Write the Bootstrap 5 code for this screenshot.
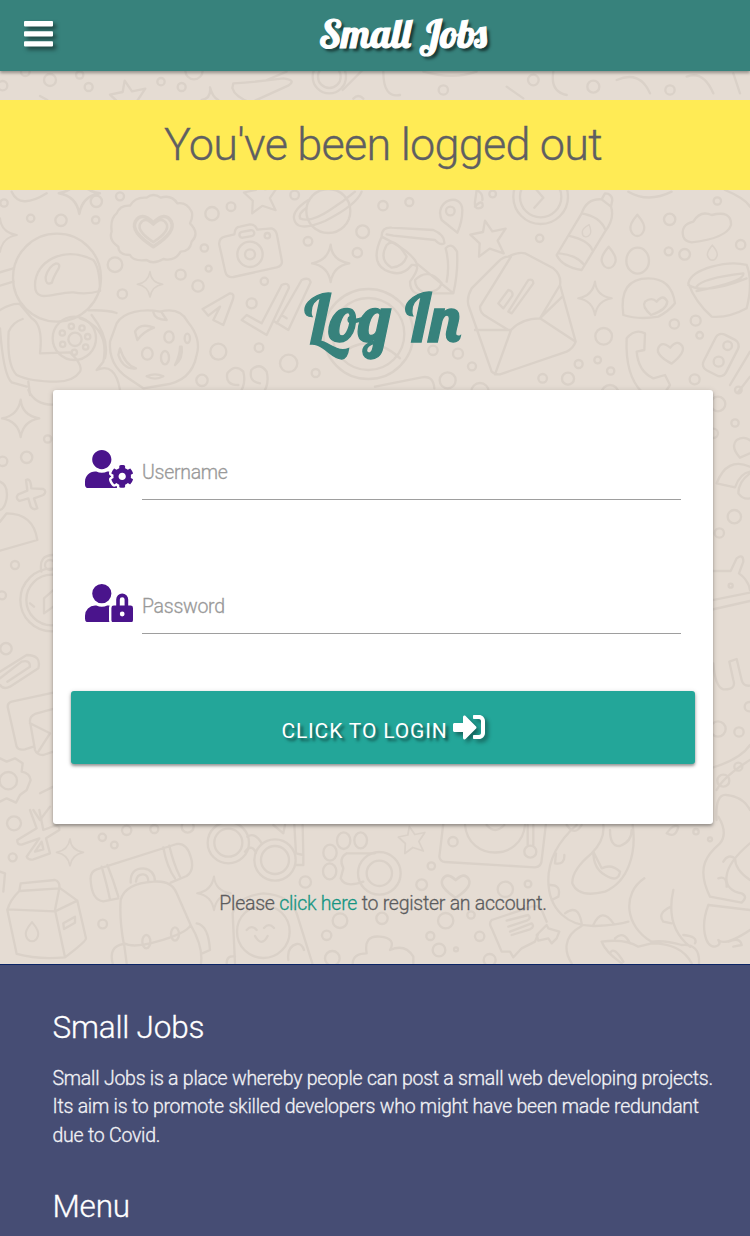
<!DOCTYPE html>
<html lang="en">
<head>
<meta charset="utf-8">
<meta name="viewport" content="width=device-width, initial-scale=1">
<title>Small Jobs</title>
<link href="https://cdn.jsdelivr.net/npm/bootstrap@5.3.0/dist/css/bootstrap.min.css" rel="stylesheet">
<style>
html{overflow:hidden}
body{font-family:Roboto,sans-serif;font-weight:300;-webkit-text-stroke:.3px;font-size:19.5px;letter-spacing:-.25px;line-height:1.5;color:#5c5c5e;background:#e5dcd3;height:1236px;overflow:hidden;position:relative}
svg{-webkit-text-stroke:0}
.doodles{position:absolute;left:0;top:71px;width:750px;height:893px;z-index:-1;fill:none;stroke:#dad1c8;stroke-width:7;stroke-linejoin:round;stroke-linecap:round}
.topbar{height:71px;background:#37827c;box-shadow:0 2px 3px rgba(0,0,0,.35);padding:0 24px;position:relative}
.topbar svg{filter:drop-shadow(3px 3px 2px rgba(0,0,0,.5));margin-top:-1px}
.script{font-family:Lobster,"DejaVu Serif Condensed",serif;font-weight:400;letter-spacing:0;white-space:nowrap}
.logo{font-size:39.5px;color:#fff;text-shadow:3px 3px 3px rgba(0,0,0,.6);width:176px;margin-left:265px;line-height:70px;margin-top:-5px;-webkit-text-stroke:1.1px #fff}
.flash{margin-top:28.5px;height:90.5px;background:#ffeb55;font-size:45px;font-weight:300;line-height:90px;padding-left:16px;letter-spacing:-.77px;color:#5f5f62}
.login-title{font-size:66.5px;line-height:72px;color:#37827c;margin:91px 0 37px;padding-left:15px;-webkit-text-stroke:1.3px #37827c}
.panel{margin:0 37px 0 53px;height:434px;border-radius:3px;background:#fff;box-shadow:0 2px 3px rgba(0,0,0,.28),0 1px 6px rgba(0,0,0,.14);padding:52px 18px 0}
.field{margin:0 14.5px 76px 14px;height:58px}
.field svg{width:48px;height:38.4px;fill:#4a148c;margin:8px 9px 0 0;flex:none}
.entry{border:0;border-bottom:1px solid #9e9e9e;border-radius:0;background:none;padding:3px 0 0;height:58px;font-size:19.5px;font-weight:300;letter-spacing:-.28px;color:#555;box-shadow:none!important}
.entry::placeholder{color:#999;opacity:1}
.go{height:73px;border:0;border-radius:3px;background:#23a699!important;color:#fff!important;font-size:21px;font-weight:400;letter-spacing:.85px;-webkit-text-stroke:0;box-shadow:0 2px 3px rgba(0,0,0,.35),0 1px 5px rgba(0,0,0,.16);margin-top:-19px;text-shadow:3px 3px 3px rgba(0,0,0,.5);padding-top:14px}
.go svg{width:32px;height:32px;fill:#fff;filter:drop-shadow(3px 3px 2px rgba(0,0,0,.4));margin:-9px 0 0 5px}
.register{margin:65px 0 46px;padding-left:16px;height:29px;line-height:29px}
.register a{color:#159582;text-decoration:none}
.site-foot{background:#464d74;border-top:1px solid #0b2566;height:272px;padding:40px 30px 0 52.5px;color:#f1f1f5}
.site-foot h2{font-size:31.5px;font-weight:300;letter-spacing:-.2px;line-height:46px;margin:0;color:#fff}
.site-foot p{line-height:28.5px;margin:13.6px -10px 34.4px 0;padding:0;letter-spacing:-.24px}
</style>
</head>
<body>
<svg class="doodles" viewBox="0 71 750 893" aria-hidden="true">
<defs>
<path id="spark" d="M0-56Q4-8 56 0Q8 8 0 56Q-8 8-56 0Q-8-8 0-56Z"/>
<path id="star" d="M-12-50L10-18L50-26L26 10L44 48L2 34L-30 58L-28 18L-56-8L-18-16Z"/>
<path id="heart" d="M0 34Q-46 4-36-16Q-24-38 0-14Q24-38 36-16Q46 4 0 34Z"/>
<path id="drop" d="M0-32Q26-2 20 14Q14 32 0 32Q-14 32-20 14Q-26-2 0-32Z"/>
</defs>
<!-- strip under the bar -->
<g transform="scale(.33333)">
<circle cx="8" cy="257" r="14"/><circle cx="150" cy="240" r="18"/><circle cx="76" cy="215" r="13"/><circle cx="239" cy="225" r="11"/><circle cx="266" cy="261" r="12"/><circle cx="483" cy="245" r="11"/><circle cx="545" cy="261" r="12"/><circle cx="582" cy="212" r="26"/>
<use href="#star" transform="translate(386 292)"/><path d="M700 250Q780 245 850 235Q890 240 866 256L752 308Q704 290 697 264ZM800 240L860 215M630 262Q634 296 605 300M630 262Q638 292 655 300M120 288L142 300"/>
<circle cx="988" cy="230" r="50"/><circle cx="988" cy="230" r="34"/><path d="M1028 270L1088 210M1060 296q15-16 30 0M1150 215q0 80 50 70M1270 215q90 25 160 0M1520 260l50 35M1660 215q-10 60 40 70M1850 240q70-30 100 40M2060 230q50-20 80 50M2200 220l20 60"/>
<circle cx="1330" cy="270" r="14"/><circle cx="1600" cy="240" r="16"/><circle cx="1780" cy="260" r="18"/><circle cx="2010" cy="270" r="14"/>
</g>
<!-- astronaut, badge, camera, cookie -->
<g transform="translate(0 185) scale(.33333)">
<circle cx="171" cy="278" r="132"/><path d="M105 300C105 230 190 180 280 225Q300 250 300 318Q260 330 220 322C165 320 105 360 105 300Z"/><path d="M137 276Q145 244 168 235Q182 236 176 250Q158 280 156 293Q136 303 137 276ZM40 250L0 262M40 290L0 302M0 375Q40 352 64 358M265 376Q320 374 350 384M60 358L95 400Q130 420 120 505L210 502Q250 540 240 560Q220 590 170 590Q90 590 50 570Q20 540 26 440Q40 410 68 402M0 430Q10 570 35 592L80 605M240 400Q330 430 310 530L290 555Q345 530 360 615M85 590L90 630M275 390Q330 460 315 520"/>
<circle cx="223" cy="460" r="65"/><circle cx="225" cy="463" r="20"/><circle cx="214" cy="424" r="8"/><circle cx="246" cy="429" r="8"/><circle cx="263" cy="455" r="8"/><circle cx="257" cy="486" r="8"/><circle cx="187" cy="444" r="8"/><circle cx="188" cy="478" r="8"/><circle cx="223" cy="502" r="8"/>
<path d="M350 415C370 380 430 370 480 380Q540 365 563 410Q605 460 590 510Q575 590 490 600L430 610L385 580Q325 540 330 470ZM405 440Q420 412 462 428Q430 440 412 465ZM360 490Q375 540 408 550Q370 555 355 510ZM545 485Q550 520 525 540Q540 510 540 485ZM460 382Q465 405 500 405L485 382M440 574q25-12 50 0q-25 14-50 0"/><ellipse cx="507" cy="456" rx="14" ry="17"/><ellipse cx="442" cy="506" rx="16" ry="18"/><ellipse cx="495" cy="518" rx="12" ry="20"/><ellipse cx="562" cy="460" rx="8" ry="14"/>
<path d="M350 85Q360 60 390 62Q405 35 440 38Q460 22 482 38Q515 28 532 55Q560 50 575 80Q580 95 570 115Q600 145 575 170Q570 200 542 200Q525 230 490 222Q460 240 440 225Q400 230 390 210Q355 210 355 185Q325 165 335 140Q330 100 350 85Z"/><use href="#heart" transform="translate(460 134) scale(1.5)"/><use href="#heart" transform="translate(460 134) scale(1.1)"/>
<path d="M675 155L703 148Q705 125 720 125L750 118Q765 118 772 134L815 130Q830 135 832 155L846 230Q846 242 830 247L700 276Q680 278 676 260L658 180Q655 160 675 155Z"/><circle cx="750" cy="208" r="38"/><circle cx="750" cy="208" r="15"/><circle cx="802" cy="152" r="8"/><rect x="718" y="138" width="45" height="18" rx="9" transform="rotate(-10 740 147)"/>
<circle cx="985" cy="78" r="66"/><path d="M925 45Q870 80 885 110Q900 140 975 108Q1070 60 1085 20M918 70Q895 85 900 100Q930 115 990 75Q1030 50 1065 20" /><use href="#spark" transform="translate(992 235)"/><use href="#spark" transform="translate(450 298) scale(.68)"/><use href="#spark" transform="translate(238 25) scale(1.1)"/><use href="#spark" transform="translate(0 150) scale(.9)"/><use href="#star" transform="translate(785 30) scale(.95)"/>
<path d="M35 20Q60 75 140 25M608 372L690 325Q705 325 698 345L670 420L640 405L660 365L625 392ZM725 405L740 390L785 415L845 300Q865 290 867 308L800 450ZM830 415L905 285Q928 275 932 292L865 435L825 410M845 390L860 400"/><circle cx="1105" cy="447" r="135"/><circle cx="1105" cy="447" r="108"/><path d="M1010 520Q1100 430 1200 520"/>
<circle cx="12" cy="54" r="11"/><circle cx="92" cy="100" r="11"/><circle cx="183" cy="106" r="17"/><circle cx="287" cy="105" r="11"/><circle cx="289" cy="49" r="17"/><circle cx="360" cy="34" r="12"/><circle cx="345" cy="239" r="22"/><circle cx="367" cy="327" r="14"/><circle cx="542" cy="269" r="15"/><circle cx="594" cy="303" r="17"/><circle cx="626" cy="251" r="9"/><circle cx="613" cy="189" r="11"/><circle cx="636" cy="86" r="20"/><circle cx="693" cy="65" r="13"/><circle cx="793" cy="289" r="11"/><circle cx="755" cy="355" r="15"/><circle cx="655" cy="500" r="24"/><circle cx="777" cy="488" r="13"/><circle cx="866" cy="535" r="26"/><circle cx="606" cy="586" r="17"/><circle cx="947" cy="564" r="12"/><circle cx="884" cy="30" r="13"/><circle cx="924" cy="169" r="13"/><circle cx="1088" cy="140" r="19"/><circle cx="1072" cy="203" r="14"/>
<path d="M715 600Q675 600 682 565Q705 535 730 560Q740 600 715 630M780 595Q745 590 754 555Q780 530 800 560Q810 600 785 630"/>
</g>
<!-- glasses, envelope, bottle, cup, phone -->
<g transform="translate(375 185) scale(.33333)">
<path d="M20 155Q20 125 50 128L175 135Q210 150 208 175Q195 182 180 165L55 152L35 148M20 155Q110 200 125 235L235 325Q250 260 246 200Q230 170 212 190Q225 240 215 290M20 155Q-15 230 30 255Q80 280 110 240Q145 235 105 290Q105 340 170 325L235 325M120 285Q160 245 200 295Q190 325 145 322Q120 310 120 285Z"/><path d="M35 180Q60 155 95 215Q85 245 50 248Q10 225 35 180Z"/>
<path d="M247 143L200 105C175 45 260 20 262 75Q262 110 247 143Z"/><circle cx="226" cy="78" r="13"/><use href="#star" transform="translate(342 157)"/><circle cx="497" cy="35" r="82"/><circle cx="497" cy="35" r="62"/><path d="M485 15L505 38L478 68M300 65q15-18 22-10q5 15-12 15q-12 0-10-20L305 15Q325 25 322 45"/>
<path d="M545 210L620 85Q635 40 680 43L708 65Q720 100 690 140L620 255Q560 245 545 210ZM620 85Q675 95 690 132M580 152Q640 165 652 195M553 205Q605 210 628 240M680 43L690 25Q710 25 712 45L708 65"/><use href="#drop" transform="translate(636 137) rotate(20) scale(.6)"/><use href="#drop" transform="translate(787 121)"/><use href="#drop" transform="translate(701 217)"/><use href="#drop" transform="translate(1012 203) scale(.7)"/>
<path d="M400 215Q430 200 450 205L535 250Q560 270 555 300L602 470Q595 490 575 500L375 568Q360 570 350 560L280 360Q275 335 290 310L370 230Q385 215 400 215ZM408 215L315 365Q315 385 335 395L400 435M555 300L495 400Q440 400 408 435L360 568M300 435L408 435M495 400L602 470M500 395L562 335M370 355L400 315Q415 318 412 332L385 370ZM400 380L460 285Q475 280 475 295L410 385Z"/>
<ellipse cx="788" cy="227" rx="34" ry="39"/><path d="M745 390Q730 280 820 280Q890 280 900 355Q880 380 850 395Q790 405 745 390ZM828 390Q800 365 810 350Q830 335 845 350Q865 325 877 350Q875 375 828 390Z"/><use href="#spark" transform="translate(660 340) scale(.9)"/>
<path d="M925 155Q915 120 955 110Q975 75 1010 90Q1070 75 1068 120Q1055 160 950 172Q930 170 925 155ZM940 295C950 250 1060 225 1115 240Q1135 290 1115 370Q1060 400 1010 395Q960 350 940 295ZM940 300Q990 330 1115 280M965 305Q980 280 1105 265Q1110 290 965 318"/>
<path d="M755 460Q780 430 810 445L808 495L785 500Q790 560 835 580L870 570L885 600L865 630M755 460Q750 570 800 620"/><use href="#heart" transform="translate(887 502) rotate(-5)"/><rect x="1000" y="450" width="75" height="120" rx="20" transform="rotate(27 1037 510)"/><circle cx="1058" cy="482" r="13"/><circle cx="1031" cy="530" r="15"/><path d="M1065 600L1125 500M1090 620L1125 575M760 20Q820 55 890 20M1050 15Q1110 40 1125 65M0 605L140 577Q175 570 178 610"/>
<circle cx="24" cy="62" r="14"/><circle cx="103" cy="51" r="12"/><circle cx="353" cy="27" r="10"/><circle cx="494" cy="160" r="11"/><circle cx="884" cy="103" r="17"/><circle cx="881" cy="199" r="12"/><circle cx="929" cy="208" r="16"/><circle cx="1027" cy="48" r="11"/><circle cx="1097" cy="179" r="14"/><circle cx="686" cy="454" r="25"/><circle cx="898" cy="417" r="14"/><circle cx="962" cy="407" r="15"/><circle cx="974" cy="451" r="10"/><circle cx="174" cy="496" r="14"/><circle cx="249" cy="506" r="15"/><circle cx="291" cy="544" r="12"/><circle cx="218" cy="586" r="24"/><circle cx="503" cy="580" r="13"/><circle cx="579" cy="581" r="18"/><circle cx="611" cy="537" r="12"/><circle cx="668" cy="525" r="10"/><circle cx="707" cy="558" r="11"/><circle cx="959" cy="583" r="15"/><circle cx="315" cy="620" r="26"/><circle cx="705" cy="625" r="25"/>
</g>
<!-- left margin -->
<g transform="translate(0 390) scale(.33333)">
<use href="#spark" transform="translate(62 85)"/><circle cx="143" cy="147" r="11"/><circle cx="80" cy="202" r="17"/><circle cx="8" cy="214" r="14"/><circle cx="45" cy="525" r="12"/><circle cx="6" cy="616" r="12"/><circle cx="18" cy="776" r="17"/><path d="M85 0Q105 45 160 44M0 275Q25 285 20 325Q15 355 0 360M78 270Q92 262 94 295L130 297Q142 305 130 315L102 325L112 355Q100 362 92 350L85 325L58 333Q45 325 55 313L82 302ZM0 395L20 370Q100 370 112 450L0 482M124 545Q115 495 160 495"/><circle cx="150" cy="525" r="15"/><circle cx="155" cy="630" r="94"/><circle cx="155" cy="630" r="76"/><path d="M132 670V625L160 600M132 670L160 650M90 640l12 10M0 845L80 795Q125 795 115 835L30 890Q10 900 0 885M0 865L65 815Q90 808 90 830L22 875M160 908L35 935Q20 940 24 955L50 1070Q55 1082 75 1078L100 1070M160 957L105 972Q88 980 90 995L105 1080Q110 1095 130 1095L160 1085M90 1000L150 1030L115 1085M0 1105L20 1115L45 1105L68 1120L65 1145Q90 1150 92 1170L80 1200L60 1215L48 1238L20 1225L0 1235M120 1210L160 1190M100 1260l20 30l30-40"/><circle cx="25" cy="1172" r="26"/>
</g>
<!-- right margin -->
<g transform="translate(690 390) scale(.33333)">
<circle cx="84" cy="42" r="22"/><circle cx="135" cy="99" r="11"/><circle cx="70" cy="130" r="14"/><circle cx="145" cy="0" r="10"/><path d="M150 203Q120 170 140 150Q165 135 185 155M150 203L180 190M180 230Q110 200 80 280L135 292Q150 250 180 245M145 310Q145 275 180 250M145 310Q160 330 180 325"/><circle cx="133" cy="380" r="20"/><circle cx="88" cy="429" r="14"/><circle cx="122" cy="587" r="6"/><path d="M60 543H122L140 505Q160 490 160 515L147 550Q175 570 180 600M60 632L180 608M60 660L180 633M70 820Q75 890 100 898Q140 900 130 870L118 815L140 807L155 870Q160 890 180 887M60 1135Q150 1110 180 1065M80 1200Q100 1160 180 1110M80 1290Q75 1210 110 1215Q160 1220 180 1260"/><circle cx="178" cy="950" r="14"/><circle cx="84" cy="1017" r="23"/><circle cx="147" cy="1026" r="14"/><circle cx="145" cy="1130" r="12"/><circle cx="100" cy="1172" r="18"/>
</g>
<!-- carton, backpack, binoculars, mascot -->
<g transform="translate(0 810) scale(.33333)">
<circle cx="42" cy="40" r="21"/><circle cx="38" cy="142" r="12"/><circle cx="307" cy="82" r="11"/><circle cx="343" cy="105" r="10"/><circle cx="380" cy="61" r="14"/><circle cx="463" cy="57" r="12"/><circle cx="563" cy="50" r="18"/><circle cx="308" cy="342" r="13"/><path d="M90 0L110 55L52 90Q50 105 65 104L118 85L80 140Q85 152 100 148L150 130L138 85L178 60Q180 45 162 48L130 60L118 0M105 125L125 95L130 118Z"/><use href="#spark" transform="translate(210 127) scale(.72)"/>
<path d="M58 243L62 220L165 210Q180 215 178 233L232 272L258 385Q258 395 195 442Q115 450 50 432L22 300Q30 270 58 243L178 235L165 300L195 442M22 298L165 304M165 304L232 272M190 340L225 320V338L192 357ZM0 185L15 190L10 245"/><use href="#drop" transform="translate(96 365) scale(.9)"/>
<path d="M355 265L310 274Q275 270 272 210Q270 185 290 178L530 102Q560 98 572 140Q585 180 560 198L512 218M305 170Q325 240 330 270M322 165Q340 210 355 260M490 112Q500 170 525 205M508 107Q520 160 540 200M372 405Q358 330 362 270Q375 220 460 215Q515 210 530 250L572 345Q560 370 470 395Q400 415 372 400L380 460M338 460Q325 410 370 402M572 345Q610 410 603 460M590 340Q625 345 630 420L607 430M392 218Q390 175 430 175Q465 180 465 215M408 215Q410 192 430 193Q445 195 445 215"/><ellipse cx="439" cy="395" rx="12" ry="20"/><ellipse cx="525" cy="372" rx="12" ry="20"/>
<circle cx="685" cy="98" r="62"/><circle cx="685" cy="98" r="42"/><circle cx="825" cy="150" r="62"/><circle cx="825" cy="150" r="42"/><path d="M742 80Q765 65 785 100M735 125Q755 100 768 128M883 45L888 130L910 135V165L885 165M908 45L910 135M820 45L850 70L855 45"/>
<path d="M705 460L698 310Q710 260 790 250Q870 255 890 310L937 460M680 460Q680 435 705 440M865 450Q860 410 890 402Q905 400 912 420"/><circle cx="790" cy="365" r="79"/><path d="M740 360q15-17 30 0M792 354q15-17 30 0M765 378q20 35 38 0"/><use href="#spark" transform="translate(642 250) scale(.9)"/><circle cx="916" cy="216" r="17"/><circle cx="1020" cy="332" r="22"/><circle cx="980" cy="376" r="14"/><circle cx="997" cy="445" r="22"/><ellipse cx="990" cy="128" rx="20" ry="24"/><ellipse cx="1031" cy="92" rx="20" ry="25"/><ellipse cx="1082" cy="91" rx="19" ry="24"/><ellipse cx="989" cy="184" rx="20" ry="24"/><path d="M1040 130L1125 130M1040 130Q1015 145 1030 175L1022 205Q1035 235 1090 215"/><circle cx="1138" cy="190" r="64"/><circle cx="1138" cy="190" r="38"/><path d="M1058 460Q1060 430 1100 430Q1090 375 1140 380Q1190 385 1170 420Q1215 400 1240 440L1240 460"/>
</g>
<!-- turntable, dinosaur, bubble, bear -->
<g transform="translate(375 810) scale(.33333)">
<use href="#star" transform="translate(112 87) scale(.75)"/><path d="M205 40L193 140Q195 155 210 156L480 172Q500 170 500 150L513 40M270 45C280 155 440 155 450 45M335 45Q360 75 388 45M458 45V105M475 45V105"/><circle cx="466" cy="125" r="18"/>
<circle cx="234" cy="95" r="14"/><circle cx="169" cy="168" r="11"/><circle cx="140" cy="224" r="16"/><circle cx="391" cy="238" r="23"/><circle cx="459" cy="222" r="10"/><circle cx="212" cy="332" r="23"/><circle cx="288" cy="315" r="11"/><circle cx="166" cy="378" r="12"/><circle cx="314" cy="379" r="14"/><circle cx="192" cy="420" r="19"/><circle cx="243" cy="418" r="6"/><circle cx="21" cy="325" r="17"/><circle cx="344" cy="450" r="18"/><use href="#heart" transform="translate(242 226) scale(1.1)"/>
<path d="M350 330L455 295Q490 280 500 300L515 335M350 330Q340 340 350 355L380 425L405 425L415 442L440 415L480 395L490 370M395 332L460 315Q470 325 455 332L400 350M405 365L470 340Q480 350 465 358L410 375M485 375L515 345L520 355L553 365L545 385L530 400L520 385L490 392Z"/>
<path d="M605 45Q520 120 520 210C520 300 580 350 660 348Q730 345 760 335M685 45Q690 90 650 130Q590 180 592 220Q610 265 690 245C760 215 785 130 773 45M655 125Q655 175 690 195Q730 220 735 185Q710 160 680 175L655 125M705 60Q705 110 735 108Q770 95 770 60M543 130L540 160Q570 165 568 135M525 225Q560 225 550 260L530 270M570 310Q610 280 620 340M655 345Q680 290 715 340M808 205C740 250 750 350 830 395Q870 390 920 405Q975 400 972 460M895 240Q870 350 945 410M888 290Q845 310 865 335L890 340M620 348C560 380 570 430 590 460M680 395Q750 385 790 410L830 400Q920 400 950 460M680 395Q690 425 740 460M720 385Q745 360 765 400M705 430Q715 405 745 455M925 375Q970 380 960 400"/>
<path d="M1030 20Q1060 70 1035 100C1000 130 960 170 1005 260L1100 278Q1120 260 1100 250C1040 240 1030 180 1125 100M1045 155Q1060 130 1080 145Q1080 180 1125 210M1030 205Q1055 195 1055 230M1000 285L1125 300M1000 285C975 350 990 410 1020 410Q1040 405 1030 390Q1050 410 1125 360M1060 395Q1095 380 1100 405L1075 410"/><path d="M575 45q25 35 45 0M875 70q20-30 35-20q-8 35-35 20"/><circle cx="963" cy="65" r="8"/><circle cx="1005" cy="88" r="6"/>
</g>
</svg>

<nav class="topbar d-flex align-items-center">
<svg width="30" height="28" viewBox="0 0 30 28" fill="#fff" aria-label="Menu"><rect x="0" y="0" width="29" height="5.4" rx="1"/><rect x="0" y="10.2" width="29" height="5.2" rx="1"/><rect x="0" y="20.3" width="29" height="5.2" rx="1"/></svg>
<span class="script logo">Small Jobs</span>
</nav>
<div class="flash text-center">You've been logged out</div>
<main>
<h1 class="script login-title text-center">Log In</h1>
<form class="panel" onsubmit="return false">
<div class="field d-flex align-items-start"><svg viewBox="0 0 640 512"><path d="M610.5 373.3c2.6-14.1 2.6-28.5 0-42.6l25.8-14.9c3-1.7 4.3-5.2 3.3-8.5-6.7-21.6-18.2-41.2-33.2-57.4-2.3-2.5-6-3.1-9-1.4l-25.8 14.9c-10.9-9.3-23.4-16.5-36.9-21.3v-29.8c0-3.4-2.4-6.4-5.7-7.1-22.3-5-45-4.8-66.2 0-3.3.7-5.7 3.7-5.7 7.1v29.8c-13.5 4.8-26 12-36.9 21.3l-25.8-14.9c-2.9-1.7-6.7-1.1-9 1.4-15 16.2-26.5 35.8-33.2 57.4-1 3.3.4 6.8 3.3 8.5l25.8 14.9c-2.6 14.1-2.6 28.5 0 42.6l-25.8 14.9c-3 1.7-4.3 5.2-3.3 8.5 6.7 21.6 18.2 41.1 33.2 57.4 2.3 2.5 6 3.1 9 1.4l25.8-14.9c10.9 9.3 23.4 16.5 36.9 21.3v29.8c0 3.4 2.4 6.4 5.7 7.1 22.3 5 45 4.8 66.2 0 3.3-.7 5.7-3.7 5.7-7.1v-29.8c13.5-4.8 26-12 36.9-21.3l25.8 14.9c2.9 1.7 6.7 1.1 9-1.4 15-16.2 26.5-35.8 33.2-57.4 1-3.3-.4-6.8-3.3-8.5l-25.8-14.9zM496 400.5c-26.8 0-48.5-21.8-48.5-48.5s21.8-48.5 48.5-48.5 48.5 21.8 48.5 48.5-21.7 48.5-48.5 48.5zM224 256c70.7 0 128-57.3 128-128S294.7 0 224 0 96 57.3 96 128s57.3 128 128 128zm201.2 226.5c-2.3-1.2-4.6-2.6-6.8-3.9l-7.9 4.6c-6 3.4-12.8 5.3-19.6 5.3-10.9 0-21.4-4.6-28.9-12.6-18.3-19.8-32.3-43.9-40.2-69.6-5.5-17.7 1.9-36.4 17.9-45.7l7.9-4.6c-.1-2.6-.1-5.2 0-7.8l-7.9-4.6c-16-9.2-23.4-28-17.9-45.7.9-2.9 2.2-5.8 3.2-8.7-3.8-.3-7.5-1.2-11.4-1.2h-16.7c-22.2 10.2-46.9 16-72.9 16s-50.6-5.8-72.9-16h-16.7C60.2 288 0 348.2 0 422.4V464c0 26.5 21.5 48 48 48h352c10.1 0 19.5-3.2 27.2-8.5-1.2-3.8-2-7.7-2-11.8v-9.2z"/></svg><input class="form-control entry flex-fill" type="text" placeholder="Username" aria-label="Username"></div>
<div class="field d-flex align-items-start"><svg viewBox="0 0 640 512"><path d="M224 256A128 128 0 1 0 96 128a128 128 0 0 0 128 128zm96 64a63.08 63.08 0 0 1 8.1-30.5c-4.8-.5-9.5-1.5-14.5-1.5h-16.7a174.08 174.08 0 0 1-145.8 0h-16.7A134.43 134.43 0 0 0 0 422.4V464a48 48 0 0 0 48 48h280.9a63.54 63.54 0 0 1-8.9-32zm288-32h-32v-80a80 80 0 0 0-160 0v80h-32a32 32 0 0 0-32 32v160a32 32 0 0 0 32 32h224a32 32 0 0 0 32-32V320a32 32 0 0 0-32-32zM496 432a32 32 0 1 1 32-32 32 32 0 0 1-32 32zm32-144h-64v-80a32 32 0 0 1 64 0z"/></svg><input class="form-control entry flex-fill" type="password" placeholder="Password" aria-label="Password"></div>
<button class="go btn w-100 d-flex justify-content-center align-items-center"><span>CLICK TO LOGIN</span><svg viewBox="0 0 512 512"><path d="M416 448h-84c-6.600 0-12-5.400-12-12v-40c0-6.600 5.400-12 12-12h84c17.700 0 32-14.300 32-32V160c0-17.700-14.300-32-32-32h-84c-6.600 0-12-5.400-12-12V76c0-6.600 5.400-12 12-12h84c53 0 96 43 96 96v192c0 53-43 96-96 96zm-47-201L201 79c-15-15-41-4.500-41 17v96H24c-13.300 0-24 10.700-24 24v96c0 13.300 10.700 24 24 24h136v96c0 21.500 26 32 41 17l168-168c9.300-9.400 9.300-24.600 0-34z"/></svg></button>
</form>
<p class="register text-center">Please <a href="#">click here</a> to register an account.</p>
</main>
<footer class="site-foot">
<h2>Small Jobs</h2>
<p>Small Jobs is a place whereby people can post a small web developing projects.<br>Its aim is to promote skilled developers who might have been made redundant<br>due to Covid.</p>
<h2>Menu</h2>
</footer>
<script src="https://cdn.jsdelivr.net/npm/bootstrap@5.3.0/dist/js/bootstrap.bundle.min.js"></script>
</body>
</html>
